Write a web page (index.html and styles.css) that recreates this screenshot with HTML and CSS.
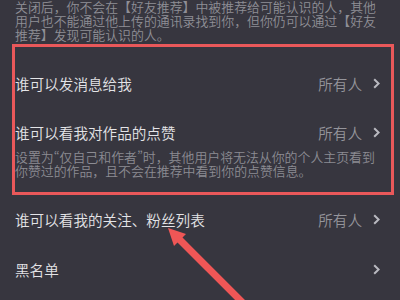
FILE: index.html
```html
<!DOCTYPE html>
<html lang="zh-CN">
<head>
<meta charset="utf-8">
<link rel="stylesheet" href="styles.css">
</head>
<body>
<div class="page">
  <p class="intro">关闭后，你不会在【好友推荐】中被推荐给可能认识的人，其他用户也不能通过他上传的通讯录找到你，但你仍可以通过【好友推荐】发现可能认识的人。</p>
  <div class="list">
    <div class="row">
      <span class="title">谁可以发消息给我</span>
      <span class="value">所有人</span>
      <svg class="chev" viewBox="0 0 7 11"><polyline points="1.2,1.2 5.6,5.5 1.2,9.8"/></svg>
    </div>
    <div class="row-tall">
      <div class="row-head">
        <span class="title">谁可以看我对作品的点赞</span>
        <span class="value">所有人</span>
        <svg class="chev" viewBox="0 0 7 11"><polyline points="1.2,1.2 5.6,5.5 1.2,9.8"/></svg>
      </div>
      <p class="desc">设置为<span class="q">“</span>仅自己和作者<span class="q">”</span>时，其他用户将无法从你的个人主页看到你赞过的作品，且不会在推荐中看到你的点赞信息。</p>
    </div>
    <div class="row">
      <span class="title">谁可以看我的关注、粉丝列表</span>
      <span class="value">所有人</span>
      <svg class="chev" viewBox="0 0 7 11"><polyline points="1.2,1.2 5.6,5.5 1.2,9.8"/></svg>
    </div>
    <div class="row">
      <span class="title">黑名单</span>
      <svg class="chev" viewBox="0 0 7 11"><polyline points="1.2,1.2 5.6,5.5 1.2,9.8"/></svg>
    </div>
  </div>
  <div class="highlight"></div>
  <svg class="arrow" viewBox="0 0 400 300" width="400" height="300">
    <line x1="178" y1="238" x2="260" y2="320"/>
    <polygon points="168,228 186,234 174,246"/>
  </svg>
</div>
</body>
</html>
```
FILE: styles.css
```css
html, body {
  margin: 0;
  padding: 0;
  background: #37363f;
}
body {
  width: 400px;
  height: 300px;
  overflow: hidden;
  font-family: "Noto Sans CJK SC", "Noto Sans", sans-serif;
  font-weight: 350;
}
.page {
  position: relative;
  width: 400px;
  height: 300px;
}
.intro {
  margin: 0;
  padding: 0 12px 0 15px;
  font-size: 12.9px;
  line-height: 14px;
  color: #8f8f96;
}
.list {
  margin-top: 16px;
}
.row, .row-head {
  display: flex;
  align-items: center;
  padding: 0 20px 0 15px;
}
.row {
  height: 50px;
}
.row-head {
  height: 20px;
}
.row-tall {
  padding: 14px 0 16px;
}
.title {
  flex: 1;
  font-size: 14.6px;
  color: #e4e4e7;
  white-space: nowrap;
}
.value {
  font-size: 14.6px;
  color: #95959b;
  margin-right: 11px;
}
.chev {
  width: 7px;
  height: 11px;
  fill: none;
  stroke: #b9b9c0;
  stroke-width: 2;
}
.desc {
  margin: 8px 0 0;
  padding: 0 20px 0 15px;
  font-size: 12.9px;
  line-height: 14px;
  color: #8c8c93;
}
.q {
  font-feature-settings: "pwid" 1;
}
.highlight {
  position: absolute;
  left: 12px;
  top: 44px;
  width: 376px;
  height: 145px;
  border: 3px solid #e9585a;
}
.arrow {
  position: absolute;
  left: 0;
  top: 0;
}
.arrow line {
  stroke: #ef5656;
  stroke-width: 7;
}
.arrow polygon {
  fill: #ef5656;
}
```
